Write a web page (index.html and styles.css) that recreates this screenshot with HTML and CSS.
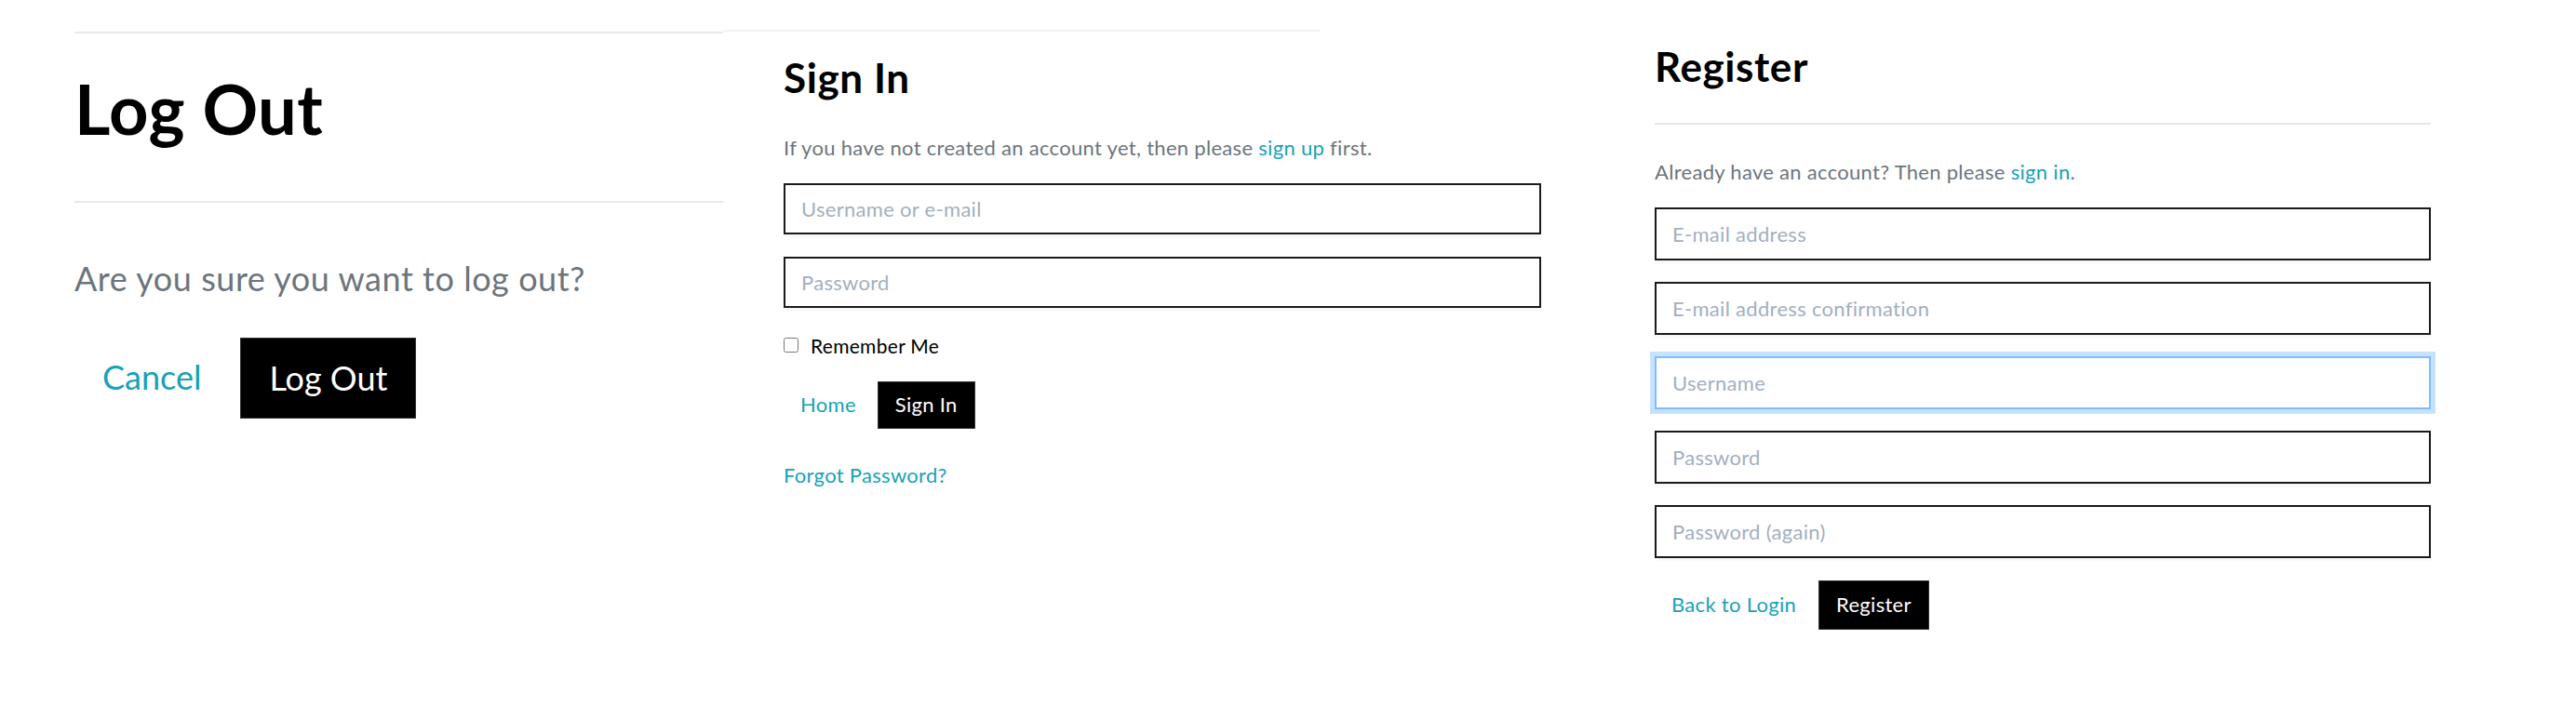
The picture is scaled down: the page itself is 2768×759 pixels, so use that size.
FILE: index.html
```html
<!DOCTYPE html>
<html lang="en">
<head>
<meta charset="utf-8">
<title>Account pages</title>
<link rel="stylesheet" href="styles.css">
</head>
<body>
<div class="panels">
  <section class="panel logout">
    <hr class="rule rule-top">
    <h1 class="title-xl">Log Out</h1>
    <hr class="rule rule-mid">
    <p class="lead">Are you sure you want to log out?</p>
    <div class="actions actions-lg">
      <a class="btn-link lg" href="#">Cancel</a>
      <button class="btn-dark lg" type="button">Log Out</button>
    </div>
  </section>

  <section class="panel signin">
    <div class="top-line"></div>
    <div class="panel-body">
      <h2 class="title">Sign In</h2>
      <p class="note">If you have not created an account yet, then please <a class="link" href="#">sign up</a> first.</p>
      <input class="field" type="text" placeholder="Username or e-mail">
      <input class="field field-next" type="password" placeholder="Password">
      <label class="remember"><input class="check" type="checkbox"><span>Remember Me</span></label>
      <div class="actions">
        <a class="btn-link" href="#">Home</a>
        <button class="btn-dark" type="button">Sign In</button>
      </div>
      <a class="link forgot" href="#">Forgot Password?</a>
    </div>
  </section>

  <section class="panel register">
    <h2 class="title title-reg">Register</h2>
    <hr class="rule rule-reg">
    <p class="note note-reg">Already have an account? Then please <a class="link" href="#">sign in</a>.</p>
    <div class="fields">
      <input class="field tall" type="email" placeholder="E-mail address">
      <input class="field tall" type="email" placeholder="E-mail address confirmation">
      <input class="field tall focus" type="text" placeholder="Username">
      <input class="field tall" type="password" placeholder="Password">
      <input class="field tall" type="password" placeholder="Password (again)">
    </div>
    <div class="actions actions-reg">
      <a class="btn-link" href="#">Back to Login</a>
      <button class="btn-dark" type="button">Register</button>
    </div>
  </section>
</div>
</body>
</html>
```

FILE: styles.css
```css
* { box-sizing: border-box; }

html, body {
  margin: 0;
  padding: 0;
  background: #fff;
}

body {
  font-family: "Lato", "Noto Sans", "DejaVu Sans", sans-serif;
  color: #000;
  letter-spacing: 0.3px;
}

.panels {
  display: flex;
  align-items: flex-start;
  width: 2768px;
}

.panel {
  display: flex;
  flex-direction: column;
  align-items: flex-start;
}

/* ---------- Log Out ---------- */
.logout {
  width: 777px;
  padding-left: 80px;
}

.rule {
  border: 0;
  height: 2px;
  background: #e8e8e8;
  margin: 0;
  align-self: stretch;
}

.rule-top { margin-top: 34px; }

.title-xl {
  font-size: 74px;
  line-height: 1.2;
  font-weight: 700;
  letter-spacing: 0.4px;
  margin: 37px 0 0;
}

.rule-mid { margin-top: 54px; }

.lead {
  font-size: 36px;
  line-height: 1.2;
  color: #6c757d;
  letter-spacing: 0.55px;
  margin: 60px 0 0;
}

.actions {
  display: flex;
  align-items: center;
  gap: 5px;
  margin-top: 26px;
}

.actions-lg {
  gap: 12px;
  margin-top: 42px;
}

.btn-link {
  color: #17a2b8;
  text-decoration: none;
  font-size: 22px;
  line-height: 1.2;
  padding: 11px 18px;
}

.btn-dark {
  background: #000;
  color: #fff;
  border: 1px solid #333;
  font-family: inherit;
  letter-spacing: inherit;
  font-size: 22px;
  line-height: 1.2;
  padding: 11px 18px;
  height: 51px;
  border-radius: 0;
}

.btn-link.lg, .btn-dark.lg {
  font-size: 36px;
  letter-spacing: 0;
  padding: 21px 30px;
  height: 87px;
}

/* ---------- Sign In ---------- */
.signin {
  width: 1001px;
}

.top-line {
  width: 642px;
  height: 2px;
  background: #f1f1f1;
  margin-top: 32px;
}

.panel-body {
  display: flex;
  flex-direction: column;
  align-items: flex-start;
  padding-left: 65px;
  width: 100%;
}

.title {
  font-size: 44px;
  line-height: 1.2;
  font-weight: 700;
  letter-spacing: 0.6px;
  margin: 23px 0 0;
}

.note {
  font-size: 22px;
  line-height: 1.5;
  color: #6c757d;
  margin: 32px 0 0;
}

.link {
  color: #17a2b8;
  text-decoration: none;
}

.field {
  display: block;
  width: 814px;
  height: 55px;
  margin-top: 22px;
  border: 2px solid #1a1a1a;
  border-radius: 0;
  padding: 0 17px;
  font-family: inherit;
  letter-spacing: inherit;
  font-size: 22px;
  color: #333;
  background: #fff;
  box-shadow: 0 3px 3px rgba(0, 0, 0, 0.04);
  outline: none;
}

.field::placeholder { color: #a3afbf; }

.field-next { margin-top: 24px; }

.remember {
  display: flex;
  align-items: center;
  gap: 13px;
  margin-top: 28px;
  font-size: 21px;
  line-height: 1.2;
}

.check {
  width: 16px;
  height: 16px;
  margin: 0;
}

.forgot {
  font-size: 22px;
  line-height: 1.2;
  margin-top: 37px;
}

/* ---------- Register ---------- */
.register {
  width: 834px;
}

.title-reg { margin-top: 45px; }

.rule-reg { margin-top: 34px; }

.note-reg { margin-top: 34px; }

.fields {
  display: flex;
  flex-direction: column;
  gap: 23px;
  margin-top: 22px;
  align-self: stretch;
}

.field.tall {
  width: 834px;
  height: 57px;
  margin-top: 0;
}

.field.focus {
  border-color: #80bdff;
  box-shadow: 0 0 0 5px rgba(0, 123, 255, 0.22);
}

.actions-reg {
  gap: 6px;
  margin-top: 24px;
}

.actions-reg .btn-dark { height: 53px; }
```
